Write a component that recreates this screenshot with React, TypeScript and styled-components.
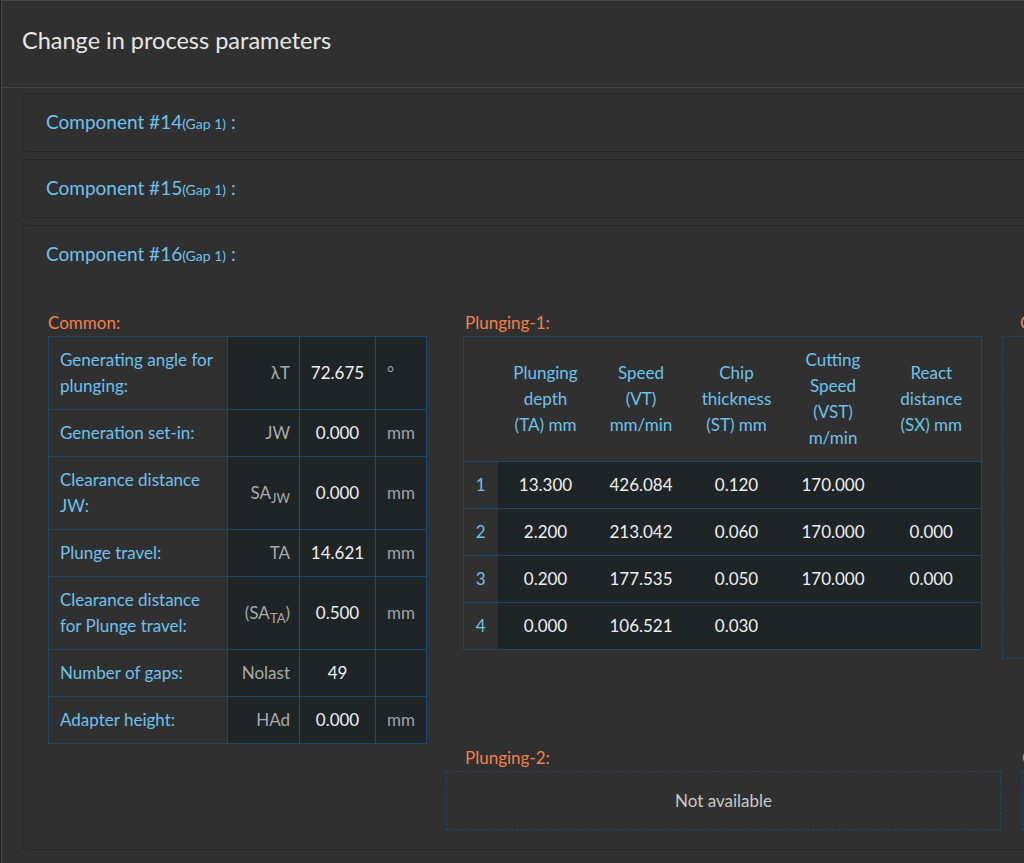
import { FunctionComponent, ReactNode } from "react";
import styled, { createGlobalStyle } from "styled-components";

const GlobalStyle = createGlobalStyle`
  html, body {
    margin: 0;
    padding: 0;
    background: #1c2024;
    overflow: hidden;
    font-family: Lato, "Open Sans", sans-serif;
  }
`;

const Backdrop = styled.div`
  display: flex;
  padding-left: 1px;
  height: 863px;
  overflow: hidden;
`;

const Modal = styled.div`
  width: 1300px;
  flex-shrink: 0;
  background: #303030;
  border-top: 1px solid #474747;
  border-left: 1px solid #474747;
`;

const ModalHeader = styled.div`
  height: 60px;
  padding: 26px 0 0 20px;
  border-bottom: 1px solid #454545;
  color: #e6e6e6;
  font-size: 23.5px;
  line-height: 26px;
`;

const ModalBody = styled.div`
  display: flex;
  flex-direction: column;
  gap: 7px;
  padding: 5px 0 0 20px;
`;

const Card = styled.div`
  border: 1px solid #262626;
  border-radius: 4px;
`;

const CardHeader = styled.div`
  height: 57px;
  line-height: 56px;
  padding-left: 23px;
  color: #6ec2ed;
  font-size: 19px;
`;

const GapNote = styled.span`
  font-size: 14px;
`;

const CardBody = styled.div`
  display: flex;
  flex-direction: column;
  gap: 5px;
  padding: 31px 0 19px 25px;
`;

const SectionRow = styled.div`
  display: flex;
  align-items: flex-start;
`;

const Section = styled.div<{ $width: number; $after?: number }>`
  width: ${(p) => p.$width}px;
  margin-right: ${(p) => p.$after ?? 0}px;
  flex-shrink: 0;
`;

const SectionLabel = styled.div<{ $indent?: number }>`
  height: 18px;
  padding: 0 0 4px ${(p) => p.$indent ?? 0}px;
  color: #f3804c;
  font-size: 17px;
  line-height: 18px;
  white-space: nowrap;
`;

const Table = styled.table<{ $width: number; $indent?: number }>`
  width: ${(p) => p.$width}px;
  margin-left: ${(p) => p.$indent ?? 0}px;
  border-collapse: collapse;
  table-layout: fixed;
  border: 1px solid #1b4a70;
  font-size: 17px;
  line-height: 26px;
`;

const LabelCell = styled.td`
  padding: 10px 8px 10px 11px;
  color: #6ec2ed;
  border: 1px solid #1b4a70;
  vertical-align: middle;
`;

const SymbolCell = styled.td`
  padding: 10px 9px 10px 2px;
  background: #1f2427;
  color: #aaaaaa;
  text-align: right;
  white-space: nowrap;
  border: 1px solid #1b4a70;
`;

const Sub = styled.span`
  font-size: 13px;
  vertical-align: -4px;
  line-height: 0;
`;

const ValueCell = styled.td`
  padding: 10px 2px;
  background: #1f2427;
  color: #f0f0f0;
  text-align: center;
  border: 1px solid #1b4a70;
`;

const UnitCell = styled.td`
  padding: 10px 2px 10px 11px;
  background: #1f2427;
  color: #a3a3a3;
  border: 1px solid #1b4a70;
  vertical-align: middle;
`;

const HeadCell = styled.th`
  padding: 10px 2px;
  color: #6ec2ed;
  font-weight: normal;
  text-align: center;
  vertical-align: middle;
  white-space: nowrap;
`;

const DataRow = styled.tr`
  border-top: 1px solid #1b4a70;
`;

const IndexCell = styled.td`
  padding: 10px 0;
  color: #6ec2ed;
  text-align: center;
`;

const DataCell = styled.td`
  padding: 10px 2px;
  background: #1f2427;
  color: #f0f0f0;
  text-align: center;
`;

const EmptyBox = styled.div<{ $width: number; $height: number }>`
  display: flex;
  align-items: center;
  justify-content: center;
  width: ${(p) => p.$width}px;
  height: ${(p) => p.$height}px;
  box-sizing: border-box;
  border: 1px dashed #1b4a70;
  color: #c9c9c9;
  font-size: 17px;
`;

type CommonRow = {
  label: string;
  symbol: ReactNode;
  value: string;
  unit: string;
};

const commonRows: CommonRow[] = [
  { label: "Generating angle for plunging:", symbol: "λT", value: "72.675", unit: "°" },
  { label: "Generation set-in:", symbol: "JW", value: "0.000", unit: "mm" },
  {
    label: "Clearance distance JW:",
    symbol: (
      <>
        SA<Sub>JW</Sub>
      </>
    ),
    value: "0.000",
    unit: "mm",
  },
  { label: "Plunge travel:", symbol: "TA", value: "14.621", unit: "mm" },
  {
    label: "Clearance distance for Plunge travel:",
    symbol: (
      <>
        (SA<Sub>TA</Sub>)
      </>
    ),
    value: "0.500",
    unit: "mm",
  },
  { label: "Number of gaps:", symbol: "Nolast", value: "49", unit: "" },
  { label: "Adapter height:", symbol: "HAd", value: "0.000", unit: "mm" },
];

const plungingHeads: ReactNode[] = [
  <>Plunging<br />depth<br />(TA) mm</>,
  <>Speed<br />(VT)<br />mm/min</>,
  <>Chip<br />thickness<br />(ST) mm</>,
  <>Cutting<br />Speed<br />(VST)<br />m/min</>,
  <>React<br />distance<br />(SX) mm</>,
];

const plungingRows: string[][] = [
  ["13.300", "426.084", "0.120", "170.000", ""],
  ["2.200", "213.042", "0.060", "170.000", "0.000"],
  ["0.200", "177.535", "0.050", "170.000", "0.000"],
  ["0.000", "106.521", "0.030", "", ""],
];

const CommonTable: FunctionComponent = () => (
  <Table $width={378}>
    <colgroup>
      <col style={{ width: 179 }} />
      <col style={{ width: 72 }} />
      <col style={{ width: 76 }} />
      <col style={{ width: 51 }} />
    </colgroup>
    <tbody>
      {commonRows.map((r) => (
        <tr key={r.label}>
          <LabelCell>{r.label}</LabelCell>
          <SymbolCell>{r.symbol}</SymbolCell>
          <ValueCell>{r.value}</ValueCell>
          <UnitCell>{r.unit}</UnitCell>
        </tr>
      ))}
    </tbody>
  </Table>
);

const PlungingTable: FunctionComponent = () => (
  <Table $width={518} $indent={17}>
    <colgroup>
      <col style={{ width: 34 }} />
      <col style={{ width: 96 }} />
      <col style={{ width: 95 }} />
      <col style={{ width: 96 }} />
      <col style={{ width: 97 }} />
      <col style={{ width: 100 }} />
    </colgroup>
    <thead>
      <tr>
        <HeadCell />
        {plungingHeads.map((h, i) => (
          <HeadCell key={i}>{h}</HeadCell>
        ))}
      </tr>
    </thead>
    <tbody>
      {plungingRows.map((row, i) => (
        <DataRow key={i}>
          <IndexCell>{i + 1}</IndexCell>
          {row.map((v, j) => (
            <DataCell key={j}>{v}</DataCell>
          ))}
        </DataRow>
      ))}
    </tbody>
  </Table>
);

const CardTitle: FunctionComponent<{ num: number }> = ({ num }) => (
  <CardHeader>
    Component #{num}
    <GapNote>(Gap 1)</GapNote> :
  </CardHeader>
);

const App: FunctionComponent = () => {
  return (
    <>
      <GlobalStyle />
      <Backdrop>
        <Modal>
          <ModalHeader>Change in process parameters</ModalHeader>
          <ModalBody>
            <Card>
              <CardTitle num={14} />
            </Card>
            <Card>
              <CardTitle num={15} />
            </Card>
            <Card>
              <CardTitle num={16} />
              <CardBody>
                <SectionRow>
                  <Section $width={378} $after={20}>
                    <SectionLabel>Common:</SectionLabel>
                    <CommonTable />
                  </Section>
                  <Section $width={556}>
                    <SectionLabel $indent={19}>Plunging-1:</SectionLabel>
                    <PlungingTable />
                  </Section>
                  <Section $width={556}>
                    <SectionLabel $indent={18}>Chamfering-1:</SectionLabel>
                    <EmptyBox $width={556} $height={323}>
                      Not available
                    </EmptyBox>
                  </Section>
                </SectionRow>
                <SectionRow>
                  <Section $width={378} $after={20} />
                  <Section $width={576}>
                    <SectionLabel $indent={19}>Plunging-2:</SectionLabel>
                    <EmptyBox $width={555} $height={59}>
                      Not available
                    </EmptyBox>
                  </Section>
                  <Section $width={556}>
                    <SectionLabel>Chamfering-2:</SectionLabel>
                    <EmptyBox $width={556} $height={59}>
                      Not available
                    </EmptyBox>
                  </Section>
                </SectionRow>
              </CardBody>
            </Card>
          </ModalBody>
        </Modal>
      </Backdrop>
    </>
  );
};

export default App;
